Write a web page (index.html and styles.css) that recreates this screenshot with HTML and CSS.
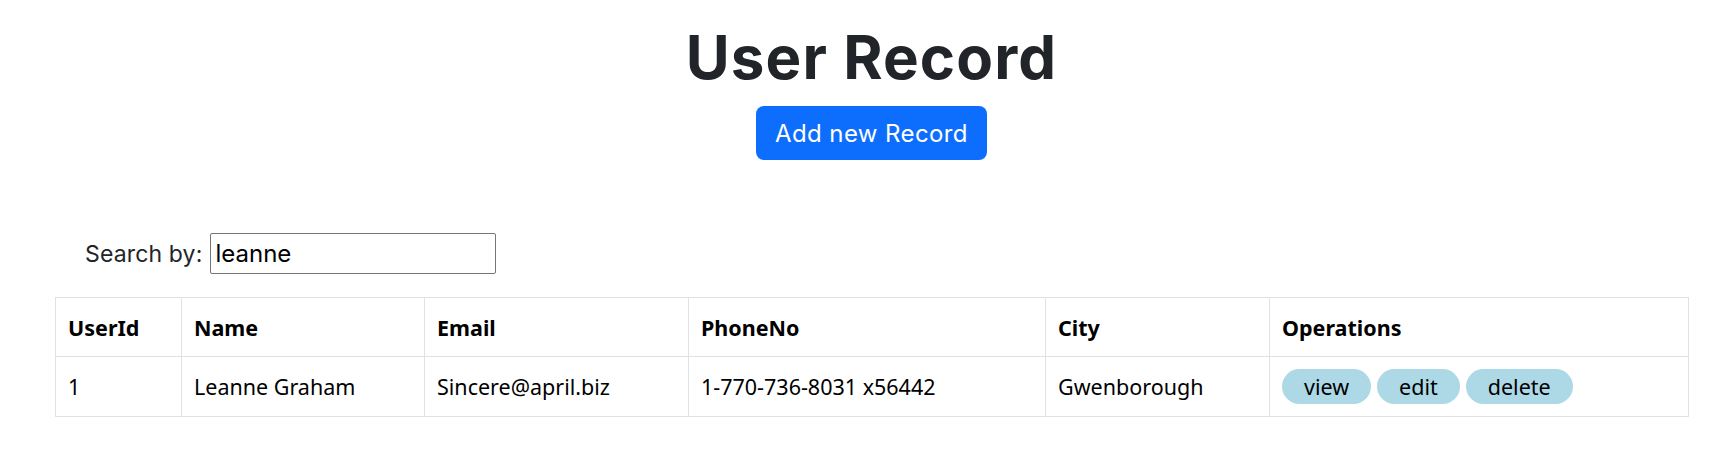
FILE: index.html
```html
<!DOCTYPE html>
<html lang="en">
<head>
<meta charset="utf-8">
<title>User Record</title>
<link rel="stylesheet" href="styles.css">
</head>
<body>
<main class="content">
  <header class="top">
    <h1 class="title">User Record</h1>
    <button class="add-btn" type="button">Add new Record</button>
  </header>
  <div class="search">
    <label class="search-label" for="q">Search by:</label>
    <input class="search-input" id="q" type="text" value="leanne">
  </div>
  <table class="records">
    <colgroup>
      <col class="c1"><col class="c2"><col class="c3"><col class="c4"><col class="c5"><col class="c6">
    </colgroup>
    <thead>
      <tr><th>UserId</th><th>Name</th><th>Email</th><th>PhoneNo</th><th>City</th><th>Operations</th></tr>
    </thead>
    <tbody>
      <tr>
        <td>1</td><td>Leanne Graham</td><td>Sincere@april.biz</td><td>1-770-736-8031 x56442</td><td>Gwenborough</td>
        <td><div class="ops"><button class="op" type="button">view</button><button class="op" type="button">edit</button><button class="op" type="button">delete</button></div></td>
      </tr>
    </tbody>
  </table>
</main>
</body>
</html>
```
FILE: styles.css
```css
html, body {
  margin: 0;
  padding: 0;
  background: #fff;
}
body {
  font-family: Inter, "Noto Sans", sans-serif;
  color: #212529;
}
.content {
  width: 1633px;
  margin-left: 55px;
}
.top {
  display: flex;
  flex-direction: column;
  align-items: center;
  padding-top: 22px;
}
.title {
  margin: 0;
  font-size: 60px;
  line-height: 70px;
  font-weight: 700;
  letter-spacing: 1.1px;
  color: #212529;
}
.add-btn {
  margin-top: 14px;
  width: 231px;
  height: 54px;
  border: none;
  border-radius: 8px;
  background: #0d6efd;
  color: #fff;
  font-family: Inter, "Noto Sans", sans-serif;
  font-size: 24px;
  letter-spacing: 0.4px;
  padding: 0;
  cursor: pointer;
}
.search {
  display: flex;
  align-items: center;
  margin-top: 73px;
  padding-left: 30px;
  height: 41px;
}
.search-label {
  font-size: 23px;
  letter-spacing: 0.15px;
  margin-right: 8px;
}
.search-input {
  box-sizing: border-box;
  width: 286px;
  height: 41px;
  border: 1px solid #767676;
  border-radius: 2px;
  padding: 0 4px;
  font-family: Inter, "Noto Sans", sans-serif;
  font-size: 24px;
  color: #000;
}
.records {
  margin-top: 23px;
  width: 1633px;
  border-collapse: collapse;
  table-layout: fixed;
  font-family: "Noto Sans", sans-serif;
  font-size: 21.5px;
  color: #000;
}
.c1 { width: 126px; }
.c2 { width: 243px; }
.c3 { width: 264px; }
.c4 { width: 357px; }
.c5 { width: 224px; }
.c6 { width: 419px; }
.records th, .records td {
  border: 1px solid #dee2e6;
  padding: 0 12px;
  text-align: left;
  vertical-align: middle;
  white-space: nowrap;
}
.records th {
  height: 58px;
  font-weight: 700;
}
.records td {
  height: 59px;
}
.ops {
  display: flex;
  gap: 6px;
}
.op {
  height: 35px;
  border: none;
  border-radius: 18px;
  background: #add8e6;
  color: #000;
  font-family: "Noto Sans", sans-serif;
  font-size: 21.5px;
  padding: 0 22px;
  cursor: pointer;
}
```
